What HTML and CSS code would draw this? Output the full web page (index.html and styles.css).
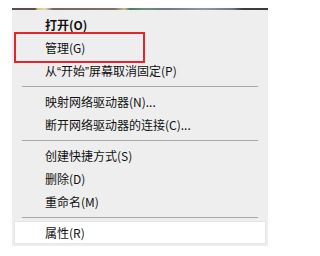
FILE: index.html
```html
<!DOCTYPE html>
<html lang="zh-CN">
<head>
<meta charset="utf-8">
<link rel="stylesheet" href="styles.css">
</head>
<body>
<div class="screen">
  <div class="wallpaper-strip"></div>
  <ul class="menu">
    <li class="item bold">打开(O)</li>
    <li class="item">管理(G)</li>
    <li class="item">从<span class="q">“</span>开始<span class="q">”</span>屏幕取消固定(P)</li>
    <li class="sep"></li>
    <li class="item">映射网络驱动器(N)...</li>
    <li class="item">断开网络驱动器的连接(C)...</li>
    <li class="sep"></li>
    <li class="item">创建快捷方式(S)</li>
    <li class="item">删除(D)</li>
    <li class="item">重命名(M)</li>
    <li class="sep"></li>
    <li class="item hover">属性(R)</li>
  </ul>
  <div class="highlight-box"></div>
</div>
</body>
</html>
```
FILE: styles.css
```css
html, body {
  margin: 0;
  padding: 0;
  background: #ffffff;
}
.screen {
  position: relative;
  width: 279px;
  height: 256px;
  padding: 8px 0 0 12px;
  box-sizing: border-box;
  font-family: "Noto Sans CJK SC", "Microsoft YaHei", sans-serif;
  font-size: 12px;
  color: #111;
}
.wallpaper-strip {
  width: 256px;
  height: 2px;
  background: linear-gradient(to right,
    #5b4d4f 0%, #5b4d4f 9%, #d9c37a 10%, #e8d9a8 13%, #6f6a5e 16%,
    #7b7466 40%, #cdb98a 44%, #4f7a66 46%, #6b8f7c 52%, #6f7a84 60%,
    #8d99a6 75%, #6f7a86 86%, #3e3e40 90%, #3a3a3a 100%);
}
.menu {
  list-style: none;
  margin: 0;
  padding: 3px 0 2px 0;
  width: 256px;
  background: #eeeeee;
}
.item {
  height: 23px;
  line-height: 23px;
  padding-left: 33px;
  white-space: nowrap;
}
.bold {
  font-weight: 700;
}
.hover {
  margin: 0 2px;
  padding-left: 30px;
  height: 21px;
  line-height: 21px;
  background: #ffffff;
  border: 1px solid #e6e6e6;
}
.sep {
  height: 8px;
  margin: 0 10px;
  display: flex;
  align-items: center;
}
.sep::before {
  content: "";
  display: block;
  width: 100%;
  height: 1px;
  background: #a8a8a8;
}
.q {
  font-family: "Liberation Sans", sans-serif;
}
.highlight-box {
  position: absolute;
  left: 14px;
  top: 32px;
  width: 131px;
  height: 31px;
  box-sizing: border-box;
  border: 2px solid #e3262b;
}
```
